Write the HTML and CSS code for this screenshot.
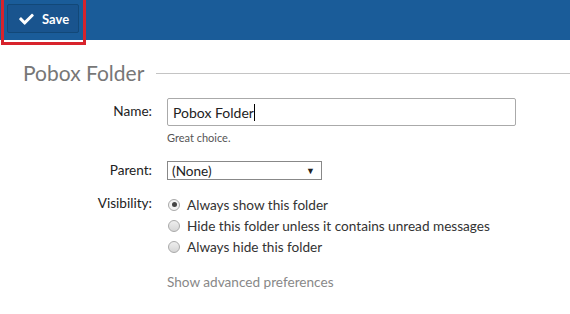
FILE: index.html
```html
<!DOCTYPE html>
<html>
<head>
    <title>Folder settings</title>
    <meta name="viewport" content="width=device-width, initial-scale=1.0">
    <link rel="stylesheet" href="styles.css">
</head>
<body>
    <div class='toolbar'>
        <button class='save-button'>
            <svg class='check' width='15' height='12' viewBox='0 0 512 420'>
                <path d='M173.9 399.4l-166.4-166.4c-10-10-10-26.2 0-36.2l36.2-36.2c10-10 26.2-10 36.2 0L192 272.7 432.1 32.6c10-10 26.2-10 36.2 0l36.2 36.2c10 10 10 26.2 0 36.2l-294.4 294.4c-10 10-26.2 10-36.2 0z' fill='#fff'/>
            </svg>
            Save
        </button>
        <div class='highlight'></div>
    </div>

    <div class='content'>
        <div class='title-row'>
            <h1 class='title'>Pobox Folder</h1>
            <div class='title-line'></div>
        </div>

        <div class='form-grid'>
            <label class='field-label label-name'>Name:</label>
            <div class='field'>
                <div class='text-input'>Pobox Folder<span class='caret'></span></div>
                <div class='hint'>Great choice.</div>
            </div>

            <label class='field-label label-parent'>Parent:</label>
            <div class='field'>
                <div class='select'>
                    <span>(None)</span>
                    <span class='arrow'>&#9660;</span>
                </div>
            </div>

            <label class='field-label label-visibility'>Visibility:</label>
            <div class='field radios'>
                <div class='radio-row'><span class='radio checked'></span>Always show this folder</div>
                <div class='radio-row'><span class='radio'></span>Hide this folder unless it contains unread messages</div>
                <div class='radio-row'><span class='radio'></span>Always hide this folder</div>
                <div class='advanced'>Show advanced preferences</div>
            </div>
        </div>
    </div>
</body>
</html>
```

FILE: styles.css
```css
html {
    font-family: 'Lato', sans-serif;
}
body {
    margin: 0;
    background: #fff;
    color: #333;
}

.toolbar {
    position: relative;
    height: 40px;
    box-sizing: border-box;
    padding: 4px 0 0 7px;
    background: #1a5c99;
}
/* red annotation box drawn over the toolbar */
.highlight {
    position: absolute;
    left: 1px;
    top: -3px;
    width: 79px;
    height: 42px;
    border: 3px solid #d8232c;
}
.save-button {
    display: flex;
    align-items: center;
    gap: 8px;
    width: 72px;
    height: 29px;
    padding: 0 0 0 11px;
    border: 1px solid #124878;
    border-radius: 2px;
    background: #19548e;
    color: #fff;
    font-family: 'Lato', sans-serif;
    font-weight: 700;
    font-size: 13px;
}
.check {
    display: block;
}

.content {
    padding: 0 0 0 23px;
}
.title-row {
    display: flex;
    align-items: center;
    gap: 12px;
    margin-top: 20px;
}
.title {
    margin: 0;
    font-size: 21px;
    line-height: 26px;
    font-weight: 400;
    color: #777;
}
.title-line {
    flex: 1;
    height: 1px;
    background: #c4c4c4;
    margin-top: 1px;
}

.form-grid {
    display: grid;
    grid-template-columns: 129px 349px;
    column-gap: 15px;
    margin-top: 12px;
    font-size: 13.6px;
}
.field-label {
    text-align: right;
    color: #222;
}
.label-name {
    padding-top: 5px;
}
.label-parent {
    padding-top: 1px;
}
.label-visibility {
    padding-top: 1px;
}

.text-input {
    height: 28px;
    box-sizing: border-box;
    border: 1px solid #aaa;
    border-radius: 2px;
    padding: 5px 5px;
    font-size: 14px;
    color: #222;
    display: flex;
    align-items: center;
}
.caret {
    display: inline-block;
    width: 1px;
    height: 17px;
    background: #000;
}
.hint {
    font-size: 11px;
    color: #555;
    margin: 5px 0 17px;
}

.select {
    width: 155px;
    height: 19px;
    box-sizing: border-box;
    border: 1px solid #888;
    display: flex;
    align-items: center;
    justify-content: space-between;
    padding: 0 6px 0 4px;
    margin-bottom: 14px;
    font-size: 13.6px;
    color: #222;
}
.arrow {
    font-size: 9px;
}

.radios {
    display: flex;
    flex-direction: column;
}
.radio-row {
    display: flex;
    align-items: center;
    height: 21px;
    color: #333;
}
.radio {
    width: 12px;
    height: 12px;
    border-radius: 50%;
    border: 1px solid #aaa;
    background: linear-gradient(#eee, #d6d6d6);
    margin: 0 7px 0 1px;
    box-sizing: border-box;
    position: relative;
}
.radio.checked {
    background: #f2f2f2;
}
.radio.checked::after {
    content: '';
    position: absolute;
    left: 2.5px;
    top: 2.5px;
    width: 5px;
    height: 5px;
    border-radius: 50%;
    background: #444;
}
.advanced {
    margin-top: 17px;
    color: #888;
}
```
